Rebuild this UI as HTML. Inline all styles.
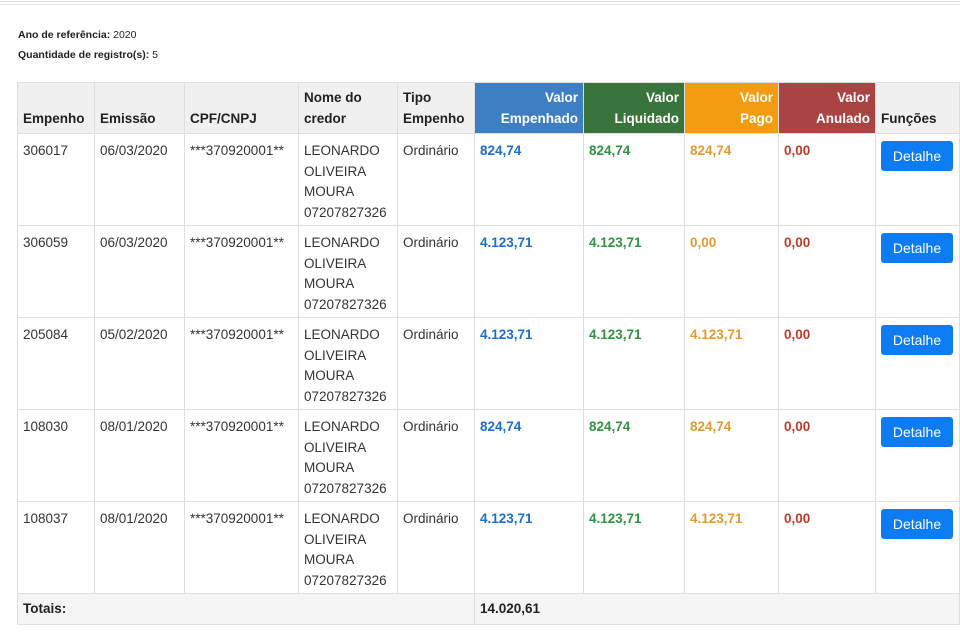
<!DOCTYPE html>
<html><head><meta charset="utf-8"><style>
body{margin:0;width:960px;height:633px;background:#fff;font-family:"Liberation Sans",sans-serif;color:#333;overflow:hidden;position:relative}
.topl{position:absolute;left:0;right:0;top:1px;height:1px;background:#ddd}
.topl2{position:absolute;left:0;right:0;top:4px;height:1px;background:#e6e6e6}
.info{position:absolute;left:18px;font-size:10.5px;color:#222}
.info b{font-weight:bold}
table{position:absolute;left:17px;top:82px;border-collapse:collapse;table-layout:fixed;width:942px;font-size:13.5px}
th,td{border:1px solid #dedede;padding:0 5px;vertical-align:top}
th{background:#f0f0f0;height:51px;box-sizing:border-box;vertical-align:bottom;padding-bottom:4px;text-align:left;font-size:13.5px;line-height:20.5px;color:#222}
th.c{color:#fff;text-align:right}
td{height:92px;padding-top:7px;box-sizing:border-box;line-height:20.5px}
td.v{font-weight:bold}
.btn{display:inline-block;background:#0d7cf2;color:#fff;border-radius:3px;padding:6px 10px;font-size:14px;line-height:18px;width:52px;text-align:center}
tr.tot td{background:#f5f5f5;height:31px;padding-top:5px;font-weight:bold;color:#222}
</style></head><body>
<div class="topl"></div><div class="topl2"></div>
<div class="info" style="top:29px"><b>Ano de referência:</b> 2020</div>
<div class="info" style="top:49px"><b>Quantidade de registro(s):</b> 5</div>
<table>
<colgroup><col style="width:77px"><col style="width:90px"><col style="width:114px"><col style="width:99px"><col style="width:77px"><col style="width:109px"><col style="width:101px"><col style="width:94px"><col style="width:97px"><col style="width:84px"></colgroup>
<tr><th>Empenho</th><th>Emissão</th><th>CPF/CNPJ</th><th>Nome do<br>credor</th><th>Tipo<br>Empenho</th><th class="c" style="background:#3d7fc2">Valor<br>Empenhado</th><th class="c" style="background:#39743c">Valor<br>Liquidado</th><th class="c" style="background:#f39c12">Valor<br>Pago</th><th class="c" style="background:#a94442">Valor<br>Anulado</th><th>Funções</th></tr>
<tr><td>306017</td><td>06/03/2020</td><td>***370920001**</td><td>LEONARDO OLIVEIRA MOURA 07207827326</td><td>Ordinário</td><td class="v" style="color:#1a6fcc">824,74</td><td class="v" style="color:#2e9440">824,74</td><td class="v" style="color:#e59a2e">824,74</td><td class="v" style="color:#c0392b">0,00</td><td><span class="btn">Detalhe</span></td></tr>
<tr><td>306059</td><td>06/03/2020</td><td>***370920001**</td><td>LEONARDO OLIVEIRA MOURA 07207827326</td><td>Ordinário</td><td class="v" style="color:#1a6fcc">4.123,71</td><td class="v" style="color:#2e9440">4.123,71</td><td class="v" style="color:#e59a2e">0,00</td><td class="v" style="color:#c0392b">0,00</td><td><span class="btn">Detalhe</span></td></tr>
<tr><td>205084</td><td>05/02/2020</td><td>***370920001**</td><td>LEONARDO OLIVEIRA MOURA 07207827326</td><td>Ordinário</td><td class="v" style="color:#1a6fcc">4.123,71</td><td class="v" style="color:#2e9440">4.123,71</td><td class="v" style="color:#e59a2e">4.123,71</td><td class="v" style="color:#c0392b">0,00</td><td><span class="btn">Detalhe</span></td></tr>
<tr><td>108030</td><td>08/01/2020</td><td>***370920001**</td><td>LEONARDO OLIVEIRA MOURA 07207827326</td><td>Ordinário</td><td class="v" style="color:#1a6fcc">824,74</td><td class="v" style="color:#2e9440">824,74</td><td class="v" style="color:#e59a2e">824,74</td><td class="v" style="color:#c0392b">0,00</td><td><span class="btn">Detalhe</span></td></tr>
<tr><td>108037</td><td>08/01/2020</td><td>***370920001**</td><td>LEONARDO OLIVEIRA MOURA 07207827326</td><td>Ordinário</td><td class="v" style="color:#1a6fcc">4.123,71</td><td class="v" style="color:#2e9440">4.123,71</td><td class="v" style="color:#e59a2e">4.123,71</td><td class="v" style="color:#c0392b">0,00</td><td><span class="btn">Detalhe</span></td></tr>
<tr class="tot"><td colspan="5">Totais:</td><td colspan="5">14.020,61</td></tr>
</table>
</body></html>
